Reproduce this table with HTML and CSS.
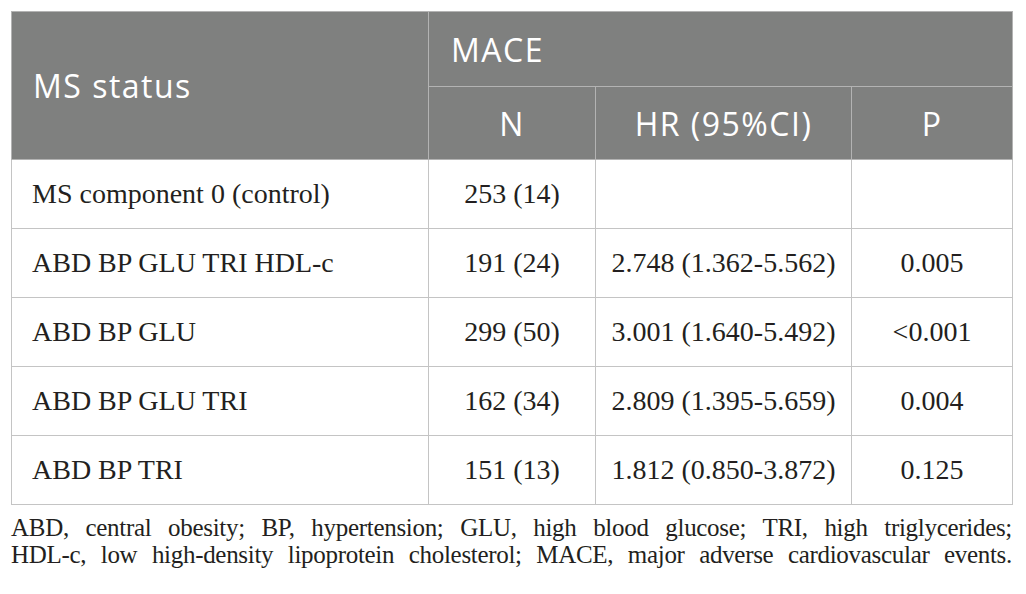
FILE: index.html
```html
<!DOCTYPE html>
<html lang="en">
<head>
    <meta charset="UTF-8">
    <meta name="viewport" content="width=device-width, initial-scale=1.0">
    <title>MS status and MACE</title>
    <link rel="stylesheet" href="styles.css">
</head>
<body>
    <div class="container">
        <table class="results">
            <colgroup>
                <col class="col-status">
                <col class="col-n">
                <col class="col-hr">
                <col class="col-p">
            </colgroup>
            <thead>
                <tr class="head-top">
                    <th rowspan="2" class="left">MS status</th>
                    <th colspan="3" class="left">MACE</th>
                </tr>
                <tr class="head-sub">
                    <th>N</th>
                    <th>HR (95%CI)</th>
                    <th>P</th>
                </tr>
            </thead>
            <tbody>
                <tr>
                    <td class="left">MS component 0 (control)</td>
                    <td>253 (14)</td>
                    <td></td>
                    <td></td>
                </tr>
                <tr>
                    <td class="left">ABD BP GLU TRI HDL-c</td>
                    <td>191 (24)</td>
                    <td>2.748 (1.362-5.562)</td>
                    <td>0.005</td>
                </tr>
                <tr>
                    <td class="left">ABD BP GLU</td>
                    <td>299 (50)</td>
                    <td>3.001 (1.640-5.492)</td>
                    <td>&lt;0.001</td>
                </tr>
                <tr>
                    <td class="left">ABD BP GLU TRI</td>
                    <td>162 (34)</td>
                    <td>2.809 (1.395-5.659)</td>
                    <td>0.004</td>
                </tr>
                <tr>
                    <td class="left">ABD BP TRI</td>
                    <td>151 (13)</td>
                    <td>1.812 (0.850-3.872)</td>
                    <td>0.125</td>
                </tr>
            </tbody>
        </table>
        <p class="footnote">ABD, central obesity; BP, hypertension; GLU, high blood glucose; TRI, high triglycerides;<br>HDL-c, low high-density lipoprotein cholesterol; MACE, major adverse cardiovascular events.</p>
    </div>
</body>
</html>
```

FILE: styles.css
```css
body {
    margin: 0;
    background: #ffffff;
    font-family: "Liberation Serif", "Times New Roman", serif;
    color: #231f20;
}
.container {
    width: 1001px;
    padding: 11px 0 0 11px;
}
.results {
    width: 1001px;
    border-collapse: collapse;
    table-layout: fixed;
    border: 1px solid #c4c4c4;
}
.col-status { width: 417px; }
.col-n { width: 167px; }
.col-hr { width: 256px; }
.col-p { width: 161px; }

.results th {
    background-color: #7f807f;
    color: #ffffff;
    font-family: "Open Sans", "Lato", sans-serif;
    font-weight: normal;
    font-size: 32px;
    letter-spacing: 1.5px;
    text-align: center;
    padding: 0;
    border: 1px solid #b3b3b3;
}
.head-top th { height: 74px; }
.head-sub th { height: 72px; }
.results th.left {
    text-align: left;
    padding-left: 21px;
}
.head-top th.left + th.left {
    padding-left: 22px;
}

.results td {
    height: 68px;
    padding: 0;
    font-size: 28px;
    text-align: center;
    border: 1px solid #c4c4c4;
}
.results td.left {
    text-align: left;
    padding-left: 20px;
}

.footnote {
    margin: 9px 0 0;
    font-size: 25px;
    line-height: 27px;
    text-align: justify;
    text-align-last: justify;
    letter-spacing: -0.3px;
}
```
